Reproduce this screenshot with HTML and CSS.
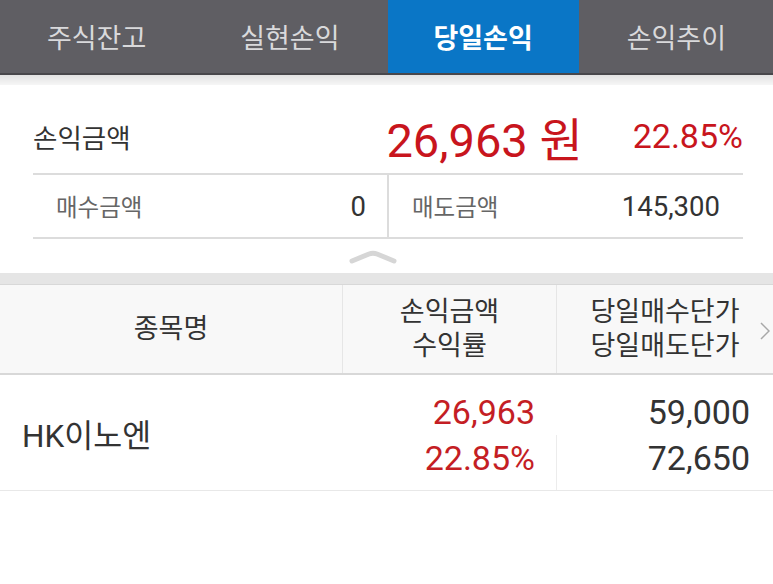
FILE: index.html
```html
<!DOCTYPE html>
<html lang="ko">
<head>
<meta charset="utf-8">
<title>당일손익</title>
<link rel="stylesheet" href="styles.css">
</head>
<body>

<div class="tabs">
	<div class="tab">주식잔고</div>
	<div class="tab">실현손익</div>
	<div class="tab active">당일손익</div>
	<div class="tab">손익추이</div>
</div>
<div class="tab-shadow"></div>

<div class="summary">
	<div class="total">
		<span class="total-label">손익금액</span>
		<span class="total-amount">26,963 원</span>
		<span class="total-rate">22.85%</span>
	</div>
	<div class="detail">
		<div class="detail-cell">
			<span class="detail-label">매수금액</span>
			<span class="detail-value">0</span>
		</div>
		<div class="detail-cell split">
			<span class="detail-label">매도금액</span>
			<span class="detail-value">145,300</span>
		</div>
	</div>
	<div class="fold">
		<svg width="48" height="14" viewBox="0 0 48 14">
			<path d="M3 11 L20 4 Q24 2.4 28 4 L45 11" fill="none" stroke="#d6d6d6" stroke-width="5" stroke-linecap="round" stroke-linejoin="round"/>
		</svg>
	</div>
</div>

<div class="band"></div>

<div class="grid head">
	<div class="col">종목명</div>
	<div class="col split">손익금액<br>수익률</div>
	<div class="col split">
		당일매수단가<br>당일매도단가
		<span class="more">
			<svg width="10" height="20" viewBox="0 0 10 20">
				<path d="M1 2 L9 10 L1 18" fill="none" stroke="#a8a8a8" stroke-width="1.5"/>
			</svg>
		</span>
	</div>
</div>

<div class="grid row">
	<div class="name">HK이노엔</div>
	<div class="nums red">
		<div class="line">26,963</div>
		<div class="line low">22.85%</div>
	</div>
	<div class="nums">
		<div class="line">59,000</div>
		<div class="line low split">72,650</div>
	</div>
</div>

</body>
</html>
```

FILE: styles.css
```css
body {
	margin: 0;
	padding: 0;
	background-color: #ffffff;
	color: #333333;
	font-family: Roboto, "Noto Sans CJK KR", sans-serif;
}

/* tabs */
.tabs {
	display: grid;
	grid-template-columns: repeat(4, 1fr);
	height: 73px;
	background-color: #5f5e63;
	border-bottom: 2px solid #48474b;
}
.tab {
	display: flex;
	align-items: center;
	justify-content: center;
	font-size: 27px;
	color: #d9d9db;
}
.tab.active {
	background-color: #0a76c6;
	color: #ffffff;
	font-weight: bold;
	margin: 0 1px;
}
.tab-shadow {
	height: 10px;
	background: linear-gradient(#e2e2e2, #f6f6f6);
}

/* summary */
.summary {
	padding: 0 30px 0 33px;
}
.total {
	display: flex;
	align-items: center;
	height: 74px;
	padding-top: 14px;
}
.total-label {
	flex: 1;
	font-size: 26.5px;
	color: #333333;
}
.total-amount {
	font-size: 47px;
	color: #c8151d;
}
.total-rate {
	margin-left: 50px;
	font-size: 34px;
	color: #c8151d;
}
.detail {
	display: grid;
	grid-template-columns: 354px 1fr;
	height: 62px;
	border-top: 2px solid #dcdcdc;
	border-bottom: 2px solid #dcdcdc;
}
.detail-cell {
	display: flex;
	align-items: center;
	justify-content: space-between;
	padding: 0 21px 0 23px;
}
.detail-cell.split {
	border-left: 2px solid #dcdcdc;
	padding-right: 23px;
}
.detail-label {
	font-size: 23.5px;
	color: #666666;
}
.detail-value {
	font-size: 27.5px;
	color: #333333;
}
.fold {
	display: flex;
	justify-content: center;
	align-items: center;
	height: 34px;
	margin-left: -30px;
	padding-top: 2px;
	box-sizing: border-box;
}

.band {
	height: 11px;
	background-color: #e5e5e5;
	border-bottom: 1px solid #d8d8d8;
}

/* list */
.grid {
	display: grid;
	grid-template-columns: 342px 214px 1fr;
}
.head {
	height: 88px;
	background-color: #f8f8f8;
	border-bottom: 2px solid #d8d8d8;
}
.col {
	position: relative;
	display: flex;
	align-items: center;
	justify-content: center;
	text-align: center;
	font-size: 27px;
	line-height: 34px;
	color: #333333;
}
.col.split {
	border-left: 1px solid #e6e6e6;
}
.more {
	position: absolute;
	right: 3px;
	top: 30px;
}
.row {
	height: 115px;
	border-bottom: 1px solid #e8e8e8;
}
.name {
	display: flex;
	align-items: center;
	padding-left: 22px;
	font-size: 31.5px;
	color: #333333;
}
.nums {
	display: flex;
	flex-direction: column;
	padding-top: 14px;
	text-align: right;
	font-size: 34px;
	color: #333333;
}
.nums.red {
	color: #c41e24;
	padding-right: 21px;
}
.nums .line {
	height: 46px;
	line-height: 46px;
	padding-right: 23px;
}
.nums.red .line {
	padding-right: 0;
}
.nums .low {
	flex: 1;
}
.nums .split {
	border-left: 1px solid #ececec;
}
```
